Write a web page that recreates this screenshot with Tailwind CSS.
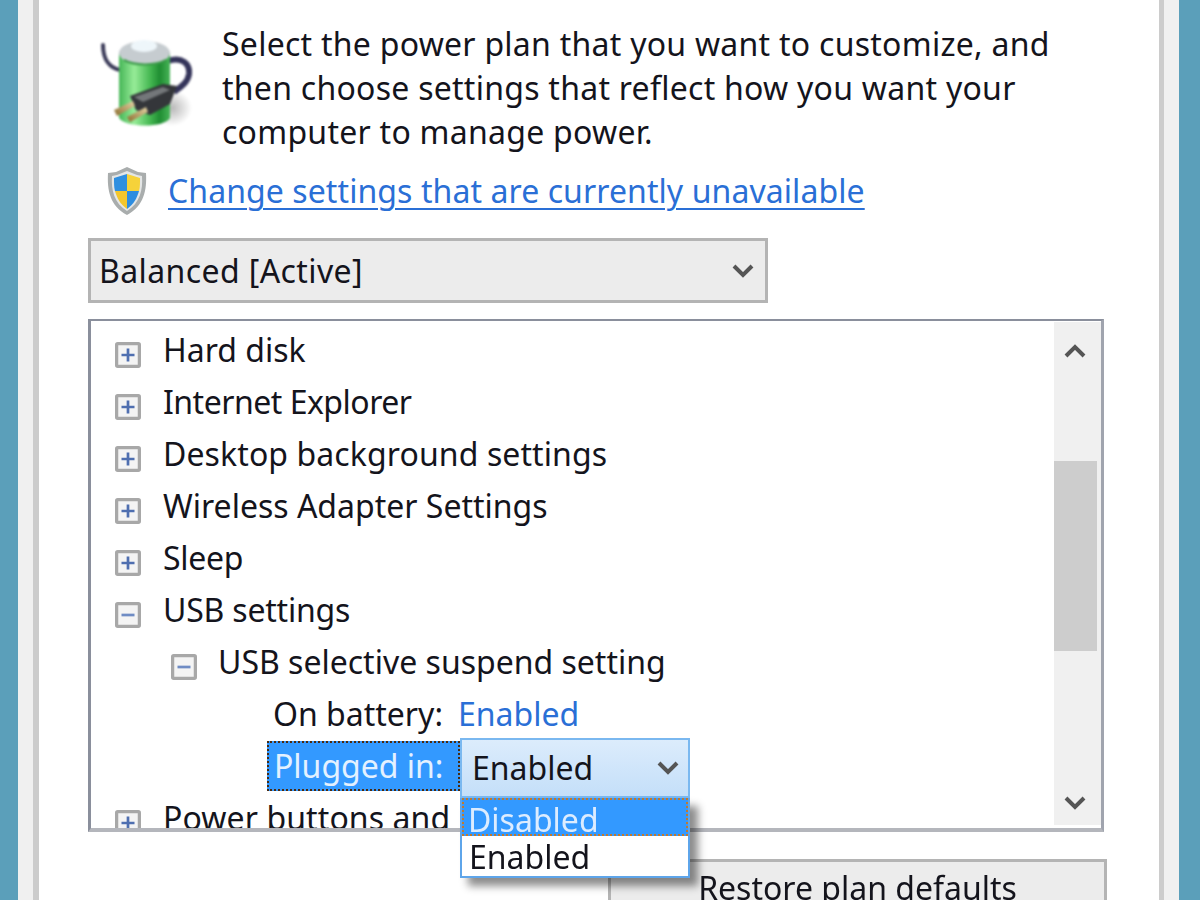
<!DOCTYPE html>
<html lang="en">
<head>
  <meta charset="utf-8">
  <title>Power Options</title>
  <script src="https://cdn.jsdelivr.net/npm/@tailwindcss/browser@4"></script>
</head>
<body class="bg-[#5b9fba] h-[900px] overflow-hidden font-['Noto_Sans','Open_Sans',sans-serif] text-[32px] text-[#14141c]">
  <!-- Window frame -->
  <div class="ml-[18px] w-[1161px] h-[900px] bg-[#f0f0f0] px-[15px] blur-[0.6px]">
    <div class="h-full bg-white border-l-[6px] border-r-[5px] border-[#cccccc] pl-[49px] relative">

      <!-- Intro -->
      <div class="flex pt-[22px] h-[162px]">
        <svg class="mt-[16px] ml-[12px] shrink-0 blur-[0.8px]" width="92" height="94" viewBox="100 38 92 94">
          <defs>
            <linearGradient id="cell" x1="0" x2="1" y1="0" y2="0">
              <stop offset="0" stop-color="#46b657"/><stop offset="0.3" stop-color="#97ec98"/>
              <stop offset="0.62" stop-color="#43b650"/><stop offset="0.8" stop-color="#1f8d32"/><stop offset="1" stop-color="#48b558"/>
            </linearGradient>
            <linearGradient id="prong" x1="0" x2="1" y1="1" y2="0">
              <stop offset="0" stop-color="#8a6a2c"/><stop offset="1" stop-color="#e6d6a8"/>
            </linearGradient>
            <radialGradient id="drop">
              <stop offset="0" stop-color="#000" stop-opacity="0.28"/><stop offset="1" stop-color="#000" stop-opacity="0"/>
            </radialGradient>
          </defs>
          <ellipse cx="172" cy="108" rx="20" ry="18" fill="url(#drop)"/>
          <path d="M103 45 C103 60 110 68 120 70" fill="none" stroke="#3a3a58" stroke-width="4" stroke-linecap="round"/>
          <path d="M168 61 C182 56 190 64 189 74 C188 82 182 86 174 92" fill="none" stroke="#34345a" stroke-width="6"/>
          <path d="M119 52 L170 52 L170 118 C165 128 125 128 119 118 Z" fill="url(#cell)"/>
          <ellipse cx="144.500" cy="53" rx="25.500" ry="12" fill="#c6ccd0"/>
          <ellipse cx="144" cy="46" rx="13" ry="6" fill="#eef6fa"/>
          <path d="M124 60 C135 66 155 66 166 60" fill="none" stroke="#3c9a4a" stroke-width="2"/>
          <path d="M130 96 L163 84 L177 86 L170 104 L150 115 L136 110 Z" fill="#34363a"/>
          <path d="M134 97 L163 87 L170 90 L143 102 Z" fill="#74777a"/>
          <path d="M114 110 L133 101 L135 106 L117 116 Z" fill="url(#prong)"/>
          <path d="M127 117 L146 107 L148 112 L130 122 Z" fill="url(#prong)"/>
        </svg>
        <p class="leading-[44px] ml-[30px] w-[900px] tracking-[0.26px]">Select the power plan that you want to customize, and<br>then choose settings that reflect how you want your<br>computer to manage power.</p>
      </div>

      <!-- Elevated link -->
      <div class="flex items-center h-[58px] relative -ml-[49px]">
        <svg class="ml-[67px] shrink-0" width="42" height="50" viewBox="0 0 42 50">
          <path d="M21 1 L32 6 L40 7 C41 24 38 40 21 49 C4 40 1 24 2 7 L10 6 Z" fill="#a9adad"/>
          <path d="M21 5 L31 9 L36 10 C37 24 34 37 21 45 C8 37 5 24 6 10 L11 9 Z" fill="#e4e6e6"/>
          <path d="M21 8 L8 12 C8 18 8 21 9 25 L21 25 Z" fill="#2f8fe0"/>
          <path d="M21 8 L34 12 C34 18 34 21 33 25 L21 25 Z" fill="#f6d23a"/>
          <path d="M9 25 L21 25 L21 43 C14 38 11 32 9 25 Z" fill="#f3c62c"/>
          <path d="M33 25 L21 25 L21 43 C28 38 31 32 33 25 Z" fill="#2d8de0"/>
        </svg>
        <a class="ml-[20px] text-[#2a6fd6] underline decoration-[2px] underline-offset-[5px] tracking-[0.08px]">Change settings that are currently unavailable</a>
      </div>

      <!-- Plan select -->
      <div class="mt-[18px] w-[680px] h-[65px] border-[3px] border-[#b4b4b4] bg-[#ececec] flex items-center justify-between pl-[8px] pr-[10px]">
        <span class="tracking-[0.4px]">Balanced [Active]</span>
        <svg width="24" height="16" viewBox="0 0 24 16"><path d="M3 3 L12 12 L21 3" fill="none" stroke="#555" stroke-width="4"/></svg>
      </div>

      <!-- Settings tree -->
      <div class="relative mt-[16px] w-[1016px] h-[513px]">
        <div class="h-full border-t-[2px] border-l-[3px] border-r-[3px] border-b-[4px] border-t-[#8a8f9c] border-l-[#8a8f9c] border-r-[#a0a4ae] border-b-[#b4b6bc] overflow-hidden flex">
          <div class="flex-1 pt-[3px]">
            <div class="h-[52px] flex items-center pl-[24px] gap-[22px]">
              <svg class="mt-[10px]" width="26" height="26" viewBox="0 0 24 24"><rect x="1.500" y="1.500" width="21" height="21" rx="1" fill="#f4f4f4" stroke="#a8a8a8" stroke-width="3"/><path d="M6 12 H18 M12 6 V18" stroke="#4f6fb0" stroke-width="2.500"/></svg>
              <span>Hard disk</span>
            </div>
            <div class="h-[52px] flex items-center pl-[24px] gap-[22px]">
              <svg class="mt-[10px]" width="26" height="26" viewBox="0 0 24 24"><rect x="1.500" y="1.500" width="21" height="21" rx="1" fill="#f4f4f4" stroke="#a8a8a8" stroke-width="3"/><path d="M6 12 H18 M12 6 V18" stroke="#4f6fb0" stroke-width="2.500"/></svg>
              <span class="tracking-[-0.5px]">Internet Explorer</span>
            </div>
            <div class="h-[52px] flex items-center pl-[24px] gap-[22px]">
              <svg class="mt-[10px]" width="26" height="26" viewBox="0 0 24 24"><rect x="1.500" y="1.500" width="21" height="21" rx="1" fill="#f4f4f4" stroke="#a8a8a8" stroke-width="3"/><path d="M6 12 H18 M12 6 V18" stroke="#4f6fb0" stroke-width="2.500"/></svg>
              <span class="tracking-[0.1px]">Desktop background settings</span>
            </div>
            <div class="h-[52px] flex items-center pl-[24px] gap-[22px]">
              <svg class="mt-[10px]" width="26" height="26" viewBox="0 0 24 24"><rect x="1.500" y="1.500" width="21" height="21" rx="1" fill="#f4f4f4" stroke="#a8a8a8" stroke-width="3"/><path d="M6 12 H18 M12 6 V18" stroke="#4f6fb0" stroke-width="2.500"/></svg>
              <span>Wireless Adapter Settings</span>
            </div>
            <div class="h-[52px] flex items-center pl-[24px] gap-[22px]">
              <svg class="mt-[10px]" width="26" height="26" viewBox="0 0 24 24"><rect x="1.500" y="1.500" width="21" height="21" rx="1" fill="#f4f4f4" stroke="#a8a8a8" stroke-width="3"/><path d="M6 12 H18 M12 6 V18" stroke="#4f6fb0" stroke-width="2.500"/></svg>
              <span class="tracking-[-0.3px]">Sleep</span>
            </div>
            <div class="h-[52px] flex items-center pl-[24px] gap-[22px]">
              <svg class="mt-[10px]" width="26" height="26" viewBox="0 0 24 24"><rect x="1.500" y="1.500" width="21" height="21" rx="1" fill="#f4f4f4" stroke="#a8a8a8" stroke-width="3"/><path d="M6 12 H18" stroke="#6f8cc4" stroke-width="2.500"/></svg>
              <span class="tracking-[-0.2px]">USB settings</span>
            </div>
            <div class="h-[52px] flex items-center pl-[80px] gap-[21px]">
              <svg class="mt-[10px]" width="26" height="26" viewBox="0 0 24 24"><rect x="1.500" y="1.500" width="21" height="21" rx="1" fill="#f4f4f4" stroke="#a8a8a8" stroke-width="3"/><path d="M6 12 H18" stroke="#6f8cc4" stroke-width="2.500"/></svg>
              <span>USB selective suspend setting</span>
            </div>
            <div class="h-[52px] flex items-center pl-[182px]">
              <span class="w-[185px]">On battery:</span>
              <span class="text-[#2a6fd6]">Enabled</span>
            </div>
            <div class="h-[52px] flex items-center pl-[176px]">
              <span class="w-[193px] h-[50px] pl-[5px] flex items-center bg-[#3399ff] text-[#e4f1ff] border-[2px] border-dotted border-[#4a2a10]">Plugged in:</span>
            </div>
            <div class="h-[52px] flex items-center pl-[24px] gap-[22px]">
              <svg class="mt-[10px]" width="26" height="26" viewBox="0 0 24 24"><rect x="1.500" y="1.500" width="21" height="21" rx="1" fill="#f4f4f4" stroke="#a8a8a8" stroke-width="3"/><path d="M6 12 H18 M12 6 V18" stroke="#4f6fb0" stroke-width="2.500"/></svg>
              <span class="tracking-[0.1px]">Power buttons and lid</span>
            </div>
          </div>

          <!-- Scrollbar -->
          <div class="w-[47px] mb-[3px] mt-[1px] bg-[#f0f0f0] flex flex-col items-center shrink-0">
            <svg class="mt-[21px] mr-[5px]" width="24" height="16" viewBox="0 0 24 16"><path d="M3 13 L12 4 L21 13" fill="none" stroke="#555" stroke-width="4"/></svg>
            <div class="w-[43px] h-[190px] mt-[102px] mr-[4px] bg-[#cdcdcd]"></div>
            <svg class="mt-auto mb-[14px] mr-[5px]" width="24" height="16" viewBox="0 0 24 16"><path d="M3 3 L12 12 L21 3" fill="none" stroke="#555" stroke-width="4"/></svg>
          </div>
        </div>

        <!-- Open combo box, hangs over the tree edge -->
        <div class="absolute left-[372px] top-[419px] w-[230px]">
          <div class="h-[60px] border-[2px] border-[#7ab8f0] bg-gradient-to-b from-[#dcecfc] to-[#c4dff9] flex items-center justify-between pl-[10px] pr-[8px]">
            <span>Enabled</span>
            <svg width="24" height="16" viewBox="0 0 24 16"><path d="M3 3 L12 12 L21 3" fill="none" stroke="#555" stroke-width="4"/></svg>
          </div>
          <div class="h-[80px] border-[2px] border-t-0 border-[#5ea5ea] bg-white shadow-[8px_8px_8px_rgba(0,0,0,0.45)]">
            <div class="h-[38px] pl-[4px] pt-[5px] leading-[28px] flex items-center bg-[#3399ff] text-[#dcecff] border-[2px] border-dotted border-[#c07a30]">Disabled</div>
            <div class="h-[40px] pl-[7px] pt-[2px] leading-[36px] flex items-center">Enabled</div>
          </div>
        </div>
      </div>

      <!-- Restore button -->
      <div class="mt-[27px] ml-[520px] w-[499px] h-[60px] border-[3px] border-[#b4b4b4] bg-[#ececec] flex justify-center pt-[2px]">
        <span>Restore plan defaults</span>
      </div>
    </div>
  </div>
</body>
</html>
